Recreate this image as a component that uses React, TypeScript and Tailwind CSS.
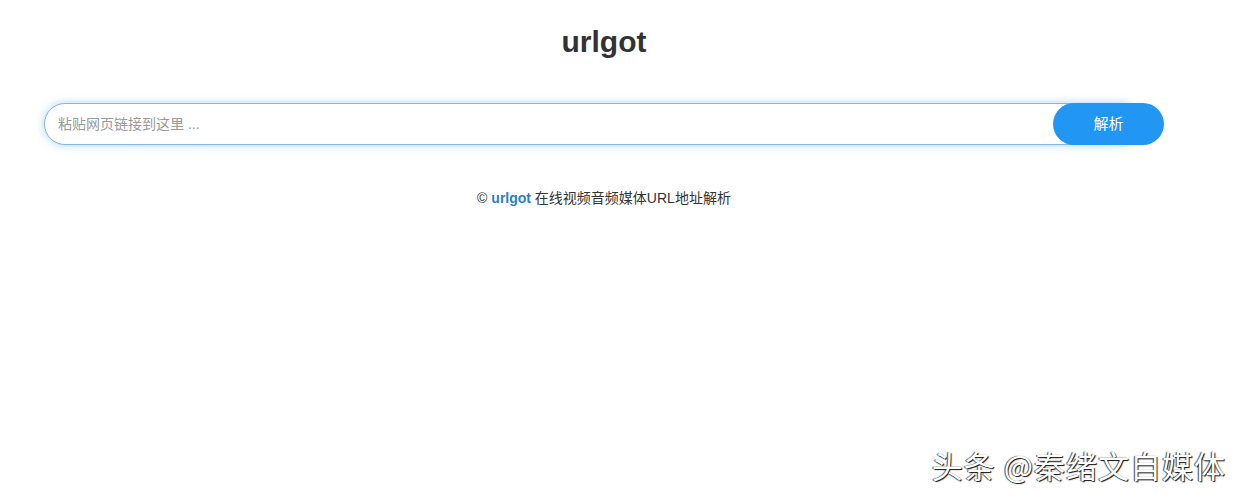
import React, { useState } from 'react';

const App: React.FC = () => {
  const [url, setUrl] = useState('');

  return (
    <div className="relative min-h-[497px] bg-white font-['Liberation_Sans','Noto_Sans_CJK_SC',sans-serif] text-[#333]">
      <div className="w-[1208px] flex flex-col items-center">
        {/* header */}
        <h1 className="pt-[24px] text-[30px] leading-[36px] font-bold text-[#333]">urlgot</h1>

        {/* search bar */}
        <form
          onSubmit={(e) => e.preventDefault()}
          className="mt-[43px] flex w-[1120px]"
        >
          <input
            type="text"
            value={url}
            onChange={(e) => setUrl(e.target.value)}
            placeholder="粘贴网页链接到这里 ..."
            className="flex-1 -mr-[87px] h-[42px] rounded-full border border-[#85b5e0] bg-white pl-[13px] pr-[100px] text-[14px] text-[#555] placeholder:text-[#999] shadow-[0_0_8px_rgba(102,175,233,0.55)] outline-none"
          />
          <button
            type="submit"
            className="relative z-10 h-[42px] w-[111px] rounded-full bg-[#2196f3] text-[15px] text-white"
          >
            解析
          </button>
        </form>

        {/* footer */}
        <p className="mt-[43px] text-[14px] leading-[20px] text-[#333]">
          © <a href="#" className="font-bold text-[#2a80c6]">urlgot</a> 在线视频音频媒体URL地址解析
        </p>
      </div>

      {/* watermark */}
      <div className="absolute right-[14px] bottom-[12px] text-[31px] leading-[40px] tracking-[1px] text-white font-['Noto_Sans_CJK_SC',sans-serif] [text-shadow:1px_1px_1px_#111,-1px_0_1px_#444]">
        头条 @秦绪文自媒体
      </div>
    </div>
  );
};

export default App;
